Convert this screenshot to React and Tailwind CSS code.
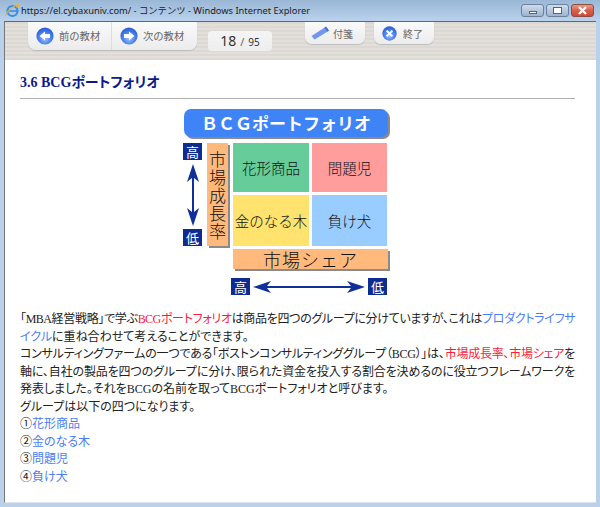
import React from 'react';

const bodyFont = "font-['Liberation_Serif','Noto_Sans_CJK_JP',serif] [font-feature-settings:'palt']";
const uiFont = "font-['Noto_Sans_CJK_JP',sans-serif]";

const RoundIcon = ({ id, size = 18, children }) => (
  <svg width={size} height={size} viewBox="0 0 18 18" className="shrink-0">
    <defs>
      <radialGradient id={id} cx="50%" cy="65%" r="60%">
        <stop offset="0%" stopColor="#9fc3fb" />
        <stop offset="55%" stopColor="#4f86ee" />
        <stop offset="100%" stopColor="#2a5fd8" />
      </radialGradient>
    </defs>
    <circle cx="9" cy="9" r="8.6" fill={`url(#${id})`} />
    {children}
  </svg>
);

const NavButton = ({ id, label, arrow, className }) => (
  <div className={`flex items-center gap-[5px] h-full ${className}`}>
    <RoundIcon id={id}>
      <path d={arrow} fill="#fff" />
    </RoundIcon>
    <span className={`text-[10.3px] text-[#666] ${uiFont}`}>{label}</span>
  </div>
);

const WinButton = ({ className, children }) => (
  <div className={`h-[13px] flex items-center justify-center rounded-[3px] border border-[#6c809c] ${className}`}>
    {children}
  </div>
);

const Badge = ({ children }) => (
  <div className={`w-[19px] h-[17px] bg-[#0d2c92] text-white text-[13px] leading-[17px] text-center ${uiFont}`}>
    {children}
  </div>
);

const Cell = ({ color, children }) => (
  <div className={`flex items-center justify-center text-[14.5px] font-light text-[#111] whitespace-nowrap ${uiFont} ${color}`}>
    {children}
  </div>
);

const Red = ({ children }) => <span className="text-[#ff1a3c]">{children}</span>;
const Blue = ({ children }) => <span className="text-[#4a7df5]">{children}</span>;

// full line, stretched to the right edge of the column
const FullLine = ({ children, className = 'tracking-[-0.3px]' }) => (
  <span className={`block text-justify [text-align-last:justify] ${className}`}>{children}</span>
);

const Diagram = () => (
  <div className="flex flex-col w-[207px] ml-[163px] mt-[10px]">
    <div className={`ml-[1px] w-[204px] h-[28px] rounded-[7px] bg-[#3f84f6] shadow-[2px_2px_0_#8a8a8a] text-white text-[17px] font-bold leading-[28px] text-center whitespace-nowrap ${uiFont}`}>
      ＢＣＧポートフォリオ
    </div>
    <div className="mt-[6px] flex h-[103px]">
      <div className="w-[19px] flex flex-col items-center justify-between">
        <Badge>高</Badge>
        <svg width="14" height="62" viewBox="0 0 14 62">
          <path d="M7 0 L13 18 L8 14 V48 L13 44 L7 62 L1 44 L6 48 V14 L1 18 Z" fill="#0f3099" />
        </svg>
        <Badge>低</Badge>
      </div>
      <div className={`ml-[5px] w-[21px] bg-[#ffb97c] shadow-[2px_2px_0_#8a8a8a] flex flex-col items-center justify-center gap-[1px] font-light text-[#111] ${uiFont}`}>
        <span className="text-[17px] leading-[17px]">市</span>
        <span className="text-[17px] leading-[17px]">場</span>
        <span className="text-[17px] leading-[17px]">成</span>
        <span className="text-[17px] leading-[17px]">長</span>
        <span className="text-[17px] leading-[17px]">率</span>
      </div>
      <div className="ml-[5px] grid grid-cols-[76px_75px] grid-rows-[49px_51px] gap-[3px]">
        <Cell color="bg-[#66cc99]">花形商品</Cell>
        <Cell color="bg-[#ff9c9c]">問題児</Cell>
        <Cell color="bg-[#ffe36e]">金のなる木</Cell>
        <Cell color="bg-[#99ccff]">負け犬</Cell>
      </div>
    </div>
    <div className={`mt-[3px] ml-[50px] w-[155px] h-[20px] bg-[#ffb97c] shadow-[2px_2px_0_#8a8a8a] text-[18px] leading-[20px] tracking-[1px] font-light text-center text-[#111] whitespace-nowrap ${uiFont}`}>
      市場シェア
    </div>
    <div className="mt-[9px] ml-[48px] flex items-center gap-[3px]">
      <Badge>高</Badge>
      <svg width="112" height="14" viewBox="0 0 112 14">
        <path d="M0 7 L18 1 L14 6 H98 L94 1 L112 7 L94 13 L98 8 H14 L18 13 Z" fill="#0f3099" />
      </svg>
      <Badge>低</Badge>
    </div>
  </div>
);

export default function App() {
  return (
    <div className="w-[600px] h-[507px] overflow-hidden flex flex-col bg-[#b9d1ea]">
      {/* title bar */}
      <div className="h-[21px] shrink-0 flex items-center pl-[5px] pr-[6px] bg-gradient-to-b from-[#9ab7d6] to-[#bad2ec]">
        <svg width="15" height="15" viewBox="0 0 15 15" className="shrink-0">
          <circle cx="7.5" cy="8" r="5" fill="none" stroke="#3a8fe0" strokeWidth="2.2" />
          <path d="M4 8 H12" stroke="#3a8fe0" strokeWidth="1.6" />
          <path d="M1 13 C0 10 8 3 14 1 C15 4 13 3 11 4" fill="none" stroke="#e8b23a" strokeWidth="1.2" />
        </svg>
        <span className="ml-[1px] text-[9.3px] text-[#1a1a1a] whitespace-nowrap font-['Noto_Sans','Noto_Sans_CJK_JP',sans-serif]">
          https://el.cybaxuniv.com/ - コンテンツ - Windows Internet Explorer
        </span>
        <div className="ml-auto flex gap-[2px]">
          <WinButton className="w-[23px] bg-gradient-to-b from-[#cfdcec] to-[#9db4d0]">
            <div className="w-[8px] h-[3px] mt-[3px] bg-white border border-[#51647e]" />
          </WinButton>
          <WinButton className="w-[23px] bg-gradient-to-b from-[#cfdcec] to-[#9db4d0]">
            <div className="w-[9px] h-[7px] bg-white border border-[#51647e]" />
          </WinButton>
          <WinButton className="w-[23px] border-[#8c4d42] bg-gradient-to-b from-[#e59a86] via-[#d95f4a] to-[#c94a36] text-white">
            <svg width="11" height="9" viewBox="0 0 11 9">
              <path d="M2 1 L9 8 M9 1 L2 8" stroke="#fff" strokeWidth="2.4" />
            </svg>
          </WinButton>
        </div>
      </div>

      {/* window content */}
      <div className="flex-1 ml-1 mr-[4px] mb-[4px] flex flex-col border-l border-t border-b border-l-[#777] border-t-[#666] border-b-[#dfe4ea] bg-white overflow-hidden">
        <div className="h-[38px] shrink-0 flex items-start pl-[23px] bg-[repeating-linear-gradient(180deg,#dcd8d4_0px,#dcd8d4_2px,#e3dfdb_2px,#e3dfdb_4px)]">
          <div className="flex h-[28px] w-[169px] rounded-b-[8px] bg-gradient-to-b from-[#fafafa] to-[#ececec] shadow-[0_1px_1px_#bbb]">
            <NavButton id="prev" label="前の教材" arrow="M3.5 9 L9 4.5 V7 H14 V11 H9 V13.5 Z" className="w-[84px] pl-[8px] border-r border-[#ddd]" />
            <NavButton id="next" label="次の教材" arrow="M14.5 9 L9 4.5 V7 H4 V11 H9 V13.5 Z" className="flex-1 pl-[8px]" />
          </div>
          <div className="ml-[11px] mt-[9px] w-[64px] h-[20px] rounded-[4px] bg-gradient-to-b from-[#f4f4f4] to-[#eeeeee] flex items-baseline justify-center gap-[4px] text-[#333]">
            <span className="text-[14px] leading-[20px] font-['Noto_Sans',sans-serif]">18</span>
            <span className="text-[11px] text-[#666] font-['Noto_Sans',sans-serif]">/</span>
            <span className="text-[10px] font-['Noto_Sans',sans-serif]">95</span>
          </div>
          <div className="ml-[33px] w-[60px] h-[22px] rounded-b-[7px] bg-gradient-to-b from-[#fafafa] to-[#ececec] shadow-[0_1px_1px_#bbb] flex items-center pl-[6px] gap-[4px]">
            <svg width="18" height="14" viewBox="0 0 18 14" className="shrink-0">
              <path d="M0.5 10 L14.5 1 L17.5 5 L3.5 13.5 Z" fill="#6f97f2" />
              <path d="M13.5 1.5 L15 0.5 L18 4.5 L16.5 5.5 Z" fill="#3a67d8" />
            </svg>
            <span className={`text-[10px] text-[#666] ${uiFont}`}>付箋</span>
          </div>
          <div className="ml-[9px] w-[60px] h-[22px] rounded-b-[7px] bg-gradient-to-b from-[#fafafa] to-[#ececec] shadow-[0_1px_1px_#bbb] flex items-center pl-[8px] gap-[6px]">
            <RoundIcon id="quit" size={15}>
              <path d="M5.5 5.5 L12.5 12.5 M12.5 5.5 L5.5 12.5" stroke="#fff" strokeWidth="2.4" />
            </RoundIcon>
            <span className={`text-[10px] text-[#666] ${uiFont}`}>終了</span>
          </div>
        </div>

        <div className="flex-1 pl-[15px] pr-[21px]">
          <h1 className={`mt-[13px] h-[25px] text-[14px] leading-[20px] font-bold text-[#0a1a8c] ${bodyFont}`}>
            3.6 BCGポートフォリオ
          </h1>
          <div className="h-px bg-[#b0b0b0]" />
          <Diagram />
          <div className={`mt-[16px] text-[12px] leading-[17.5px] text-[#222] ${bodyFont}`}>
            <FullLine className="tracking-[-0.55px]">
              「MBA経営戦略」で学ぶ<Red>BCGポートフォリオ</Red>は商品を四つのグループに分けていますが、これは<Blue>プロダクトライフサ</Blue>
            </FullLine>
            <p><Blue>イクル</Blue>に重ね合わせて考えることができます。</p>
            <FullLine>
              コンサルティングファームの一つである「ボストンコンサルティンググループ（BCG）」は、<Red>市場成長率、市場シェア</Red>を
            </FullLine>
            <FullLine>
              軸に、自社の製品を四つのグループに分け、限られた資金を投入する割合を決めるのに役立つフレームワークを
            </FullLine>
            <p>発表しました。それをBCGの名前を取ってBCGポートフォリオと呼びます。</p>
            <p>グループは以下の四つになります。</p>
            <p>①<Blue>花形商品</Blue></p>
            <p>②<Blue>金のなる木</Blue></p>
            <p>③<Blue>問題児</Blue></p>
            <p>④<Blue>負け犬</Blue></p>
          </div>
        </div>
      </div>
    </div>
  );
}
